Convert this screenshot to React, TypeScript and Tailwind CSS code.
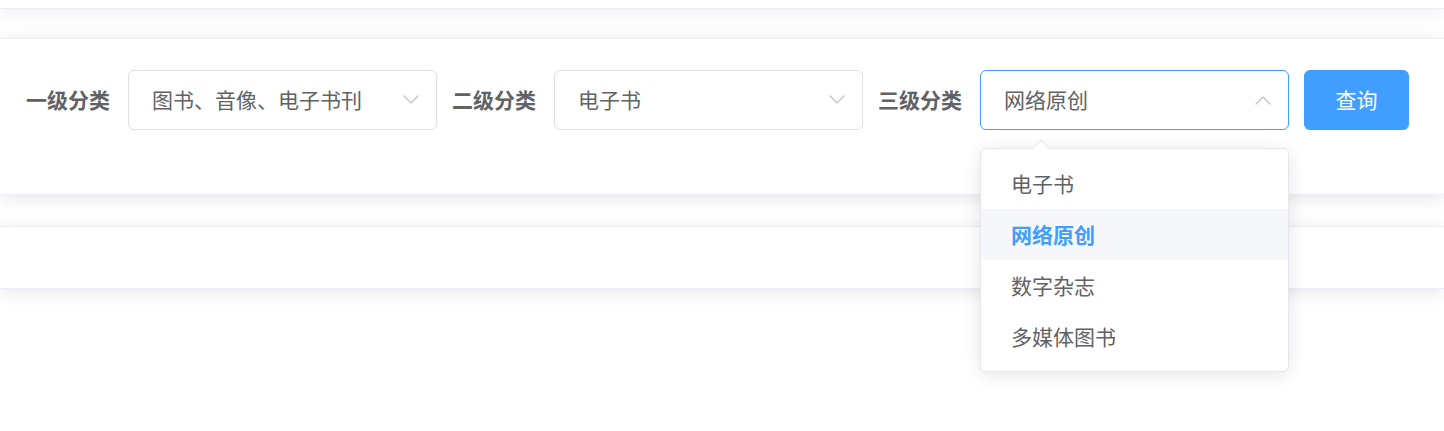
const FONT = { fontFamily: '"Noto Sans CJK SC", "Noto Sans", sans-serif' };

const OPTIONS = ["电子书", "网络原创", "数字杂志", "多媒体图书"];

function Arrow({ up = false }: { up?: boolean }) {
  return (
    <svg width="16" height="10" viewBox="0 0 16 10" fill="none" className="text-[#c0c4cc]">
      <polyline
        points={up ? "1,9 8,2 15,9" : "1,1 8,8 15,1"}
        stroke="currentColor"
        strokeWidth="1.4"
        strokeLinecap="round"
        strokeLinejoin="round"
      />
    </svg>
  );
}

function Select({ value, open = false }: { value: string; open?: boolean }) {
  return (
    <div
      className={
        "flex h-[60px] w-[309px] items-center justify-between rounded-[6px] border bg-white pl-[23px] pr-[17px] " +
        (open ? "border-[#409eff]" : "border-[#dcdfe6]")
      }
    >
      <span className="text-[21px] text-[#606266]">{value}</span>
      <Arrow up={open} />
    </div>
  );
}

function Label({ children }: { children: string }) {
  return <span className="pl-[15px] pr-[18px] text-[21px] font-bold text-[#606266]">{children}</span>;
}

export default function App() {
  return (
    <div className="min-h-[431px] bg-white" style={FONT}>
      {/* previous card, cut off at top */}
      <div className="h-[9px] border-b border-[#ebeef5] bg-white shadow-[0_3px_18px_0_rgba(0,0,0,0.1)]" />

      {/* filter card */}
      <div className="relative z-10 mt-[29px] h-[157px] border-y border-[#ebeef5] bg-white pt-[31px] pl-[11px] shadow-[0_3px_18px_0_rgba(0,0,0,0.1)]">
        <div className="flex items-center">
          <Label>一级分类</Label>
          <Select value="图书、音像、电子书刊" />
          <Label>二级分类</Label>
          <Select value="电子书" />
          <Label>三级分类</Label>
          <div className="relative">
            <Select value="网络原创" open />
            <div className="absolute left-0 top-[78px] z-20 w-[309px] rounded-[6px] border border-[#e4e7ed] bg-white py-[9px] shadow-[0_3px_18px_0_rgba(0,0,0,0.1)]">
              <div className="absolute -top-[7px] left-[54px] h-[12px] w-[12px] rotate-45 border-l border-t border-[#e4e7ed] bg-white" />
              {OPTIONS.map((o) => (
                <div
                  key={o}
                  className={
                    "flex h-[51px] items-center px-[30px] text-[21px] " +
                    (o === "网络原创" ? "bg-[#f5f7fa] font-bold text-[#409eff]" : "text-[#606266]")
                  }
                >
                  {o}
                </div>
              ))}
            </div>
          </div>
          <button className="ml-[15px] h-[60px] w-[105px] rounded-[6px] bg-[#409eff] text-[21px] text-white">
            查询
          </button>
        </div>
      </div>

      {/* next card */}
      <div className="mt-[31px] h-[63px] border-y border-[#ebeef5] bg-white shadow-[0_3px_18px_0_rgba(0,0,0,0.1)]" />
    </div>
  );
}
